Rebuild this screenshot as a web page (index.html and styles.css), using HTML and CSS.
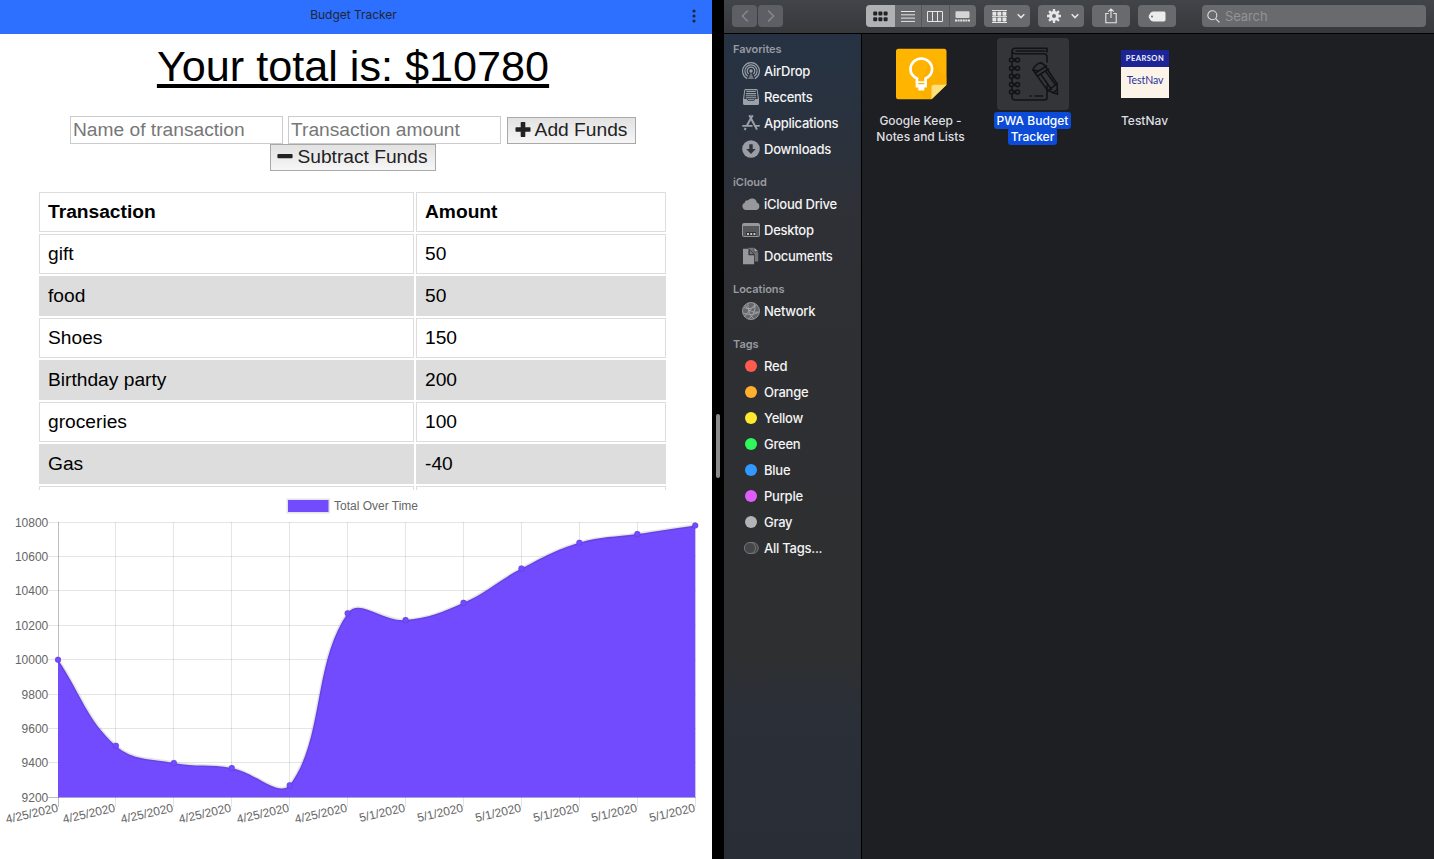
FILE: index.html
```html
<!DOCTYPE html>
<html lang="en">
<head>
<meta charset="utf-8">
<title>Budget Tracker</title>
<link rel="stylesheet" href="styles.css">
</head>
<body>
<div class="screen">
  <section class="app">
    <header class="app-bar"><span class="app-title">Budget Tracker</span>
      <svg class="app-menu" width="4" height="14" viewBox="0 0 4 14"><circle cx="2" cy="2" r="1.6"/><circle cx="2" cy="7" r="1.6"/><circle cx="2" cy="12" r="1.6"/></svg>
    </header>
    <h1 class="total">Your total is: $10780</h1>
    <form class="form">
      <div class="form-row">
        <input class="field" type="text" placeholder="Name of transaction">
        <input class="field" type="text" placeholder="Transaction amount">
        <button class="btn btn-add" type="button"><svg class="btn-icon" width="16" height="16" viewBox="0 0 16 16"><path d="M6.200 0h3.600l.5.500v4.700H15l.5.500v3.600l-.5.500h-4.700v4.700l-.5.500H6.200l-.5-.5V9.800H1l-.5-.5V5.700l.5-.5h4.700V.5z"/></svg>Add Funds</button>
      </div>
      <div class="form-row">
        <button class="btn btn-sub" type="button"><svg class="btn-icon" width="16" height="16" viewBox="0 0 16 16"><rect x=".4" y="4.900" width="15.200" height="4.400" rx="1"/></svg>Subtract Funds</button>
      </div>
    </form>
    <div class="table-wrap">
      <table class="ledger">
        <thead><tr><th class="col-name">Transaction</th><th class="col-amount">Amount</th></tr></thead>
        <tbody>
          <tr><td>gift</td><td>50</td></tr>
          <tr><td>food</td><td>50</td></tr>
          <tr><td>Shoes</td><td>150</td></tr>
          <tr><td>Birthday party</td><td>200</td></tr>
          <tr><td>groceries</td><td>100</td></tr>
          <tr><td>Gas</td><td>-40</td></tr>
          <tr><td>&nbsp;</td><td>&nbsp;</td></tr>
        </tbody>
      </table>
    </div>
    <svg class="chart" id="chart" width="712" height="369" viewBox="0 490 712 369"></svg>
  </section>

  <div class="divider"><span class="handle"></span></div>

  <section class="finder">
    <div class="toolbar">
      <div class="tool nav nav-back"><svg width="8" height="14" viewBox="0 0 8 14"><path d="M6.800 1.600 1.400 7l5.400 5.400"/></svg></div>
      <div class="tool nav"><svg width="8" height="14" viewBox="0 0 8 14"><path d="M1.200 1.600 6.600 7l-5.400 5.400"/></svg></div>
      <div class="tool views">
        <span class="seg seg-on"><svg width="15" height="11" viewBox="0 0 15 11"><g fill="#222326"><rect x=".2" y=".5" width="4" height="4" rx="1"/><rect x="5.400" y=".5" width="4" height="4" rx="1"/><rect x="10.600" y=".5" width="4" height="4" rx="1"/><rect x=".2" y="6.300" width="4" height="4" rx="1"/><rect x="5.400" y="6.300" width="4" height="4" rx="1"/><rect x="10.600" y="6.300" width="4" height="4" rx="1"/></g></svg></span>
        <span class="seg"><svg width="14" height="11" viewBox="0 0 14 11"><path d="M0 .5h14M0 3.800h14M0 7.100h14M0 10.400h14" stroke="#e6e6e7"/></svg></span>
        <span class="seg"><svg width="16" height="11" viewBox="0 0 16 11"><path d="M.5.500h15v10H.5zM5.500.5v10M10.500.5v10" fill="none" stroke="#e6e6e7"/></svg></span>
        <span class="seg"><svg width="15" height="11" viewBox="0 0 15 11"><rect x=".5" y=".3" width="14" height="6.600" rx=".8" fill="#d5d5d6"/><path d="M0 9.400h15" stroke="#e6e6e7" stroke-width="2" stroke-dasharray="2 .6"/></svg></span>
      </div>
      <div class="tool drop group"><svg width="15" height="13" viewBox="0 0 15 13"><path d="M0 .5h15M0 6.600h15M0 12.500h15" stroke="#e6e6e7"/><g fill="#e6e6e7"><rect x=".4" y="1.700" width="3.900" height="4" rx=".8"/><rect x="5.400" y="1.700" width="3.900" height="4" rx=".8"/><rect x="10.500" y="1.700" width="3.900" height="4" rx=".8"/><rect x=".4" y="7.600" width="3.900" height="4" rx=".8"/><rect x="5.400" y="7.600" width="3.900" height="4" rx=".8"/><rect x="10.500" y="7.600" width="3.900" height="4" rx=".8"/></g></svg><svg class="chev" width="8" height="6" viewBox="0 0 8 6"><path d="M.7 1.200 4 4.600l3.300-3.400"/></svg></div>
      <div class="tool drop"><svg width="14" height="14" viewBox="0 0 14 14"><circle cx="7" cy="7" r="3.500" fill="none" stroke="#e6e6e7" stroke-width="3"/><path d="M7 0v3M7 11v3M0 7h3M11 7h3M2.050 2.050l2.100 2.100M9.850 9.850l2.100 2.100M2.050 11.950l2.100-2.100M9.850 4.150l2.100-2.100" stroke="#e6e6e7" stroke-width="2.400"/></svg><svg class="chev" width="8" height="6" viewBox="0 0 8 6"><path d="M.7 1.200 4 4.600l3.300-3.400"/></svg></div>
      <div class="tool single"><svg width="12" height="16" viewBox="0 0 12 16"><path d="M3.600 5.500H.8v9.300h10.400V5.500H8.400M6 10V1M3.200 3.600 6 .9l2.800 2.700" fill="none" stroke="#e6e6e7" stroke-width="1.100"/></svg></div>
      <div class="tool single"><svg width="18" height="11" viewBox="0 0 18 11"><path d="M5 .5h10.800c1 0 1.700.7 1.700 1.700v6.600c0 1-.7 1.700-1.700 1.700H5C3.200 10.500.7 7.300.7 5.500S3.200.5 5 .5z" fill="#ececed"/><circle cx="4" cy="5.500" r="1" fill="#696a6d"/></svg></div>
      <div class="tool search"><svg width="13" height="13" viewBox="0 0 13 13"><circle cx="5.300" cy="5.300" r="4.500" fill="none" stroke="#dcdcdd" stroke-width="1.100"/><path d="m8.600 8.600 3.800 3.800" stroke="#dcdcdd" stroke-width="1.300"/></svg><span class="search-text">Search</span></div>
    </div>
    <div class="finder-body">
      <nav class="sidebar">
        <h2 class="side-head side-first">Favorites</h2>
        <div class="side-item"><svg class="side-icon" viewBox="0 0 18 18"><g fill="none" stroke="#9ba1ab" stroke-width="1.200"><path d="M5.200 16.600a8.400 8.400 0 1 1 7.600 0"/><path d="M5.800 14.200a6.100 6.100 0 1 1 6.400 0"/><path d="M6.700 12a3.800 3.800 0 1 1 4.600 0"/></g><circle cx="9" cy="9" r="1.700" fill="#9ba1ab"/><path d="M9 10.500l3 6.500H6z" fill="#9ba1ab" opacity=".6"/></svg><span>AirDrop</span></div>
        <div class="side-item"><svg class="side-icon" viewBox="0 0 18 18"><path d="M3 1h12l.7 1 1.300 9v4.500c0 .9-.6 1.500-1.500 1.500h-13C1.600 17 1 16.400 1 15.500V11L2.300 2z" fill="#9ba1ab"/><path d="M3.200 2.200h11.600l1 8.800h-2.600l-1.400 2H6.200l-1.400-2H2.200z" fill="#2b3442"/><path d="M4.300 3.500h9.400M4 5.600h10M3.900 7.700h10.200M3.800 9.800h10.400M6 11.700h6" stroke="#9ba1ab" stroke-width="1.100"/></svg><span>Recents</span></div>
        <div class="side-item"><svg class="side-icon" viewBox="0 0 18 18"><g fill="none" stroke="#9ba1ab" stroke-width="2"><path d="M7.300 1.200 15 15.600M10.700 1.200 5 11.300M3.700 13.900 2.600 16"/><path d="M.3 11.800h10.200M13 11.800h4.700" stroke-width="1.800"/></g></svg><span>Applications</span></div>
        <div class="side-item"><svg class="side-icon" viewBox="0 0 18 18"><circle cx="9" cy="9" r="8.800" fill="#9a9da4"/><path d="M7.300 4.200h3.400v4.700h3L9 13.900 4.300 8.900h3z" fill="#2e333d"/></svg><span>Downloads</span></div>
        <h2 class="side-head">iCloud</h2>
        <div class="side-item"><svg class="side-icon" viewBox="0 0 18 18"><path d="M4 15a3.800 3.800 0 0 1-1.300-7.300c.1-1.700 1.700-2.700 3.200-2.300A5 5 0 0 1 14.800 7.500 3.900 3.900 0 0 1 14.300 15z" fill="#97989b"/></svg><span>iCloud Drive</span></div>
        <div class="side-item"><svg class="side-icon" viewBox="0 0 18 18"><rect x=".5" y="2.500" width="17" height="13" rx="1" fill="#55575b" stroke="#97989b"/><path d="M1 4h16" stroke="#97989b" stroke-width="2"/><path d="M4.300 11.200h9.600v3.400H4.300z" fill="#27282b"/><path d="M5 13h8.500" stroke="#c0c1c3" stroke-width="1.800" stroke-dasharray="2 1.200"/></svg><span>Desktop</span></div>
        <div class="side-item"><svg class="side-icon" viewBox="0 0 18 18"><path d="M6.500.7h5.200v4.500h4.500v9.300h-3.400V8L9 4H6.500z" fill="#717276"/><path d="m12.300.7 3.900 3.900h-3.900z" fill="#a8a9ac"/><path d="M1 1.700h5.500v6.600h5.600v9H1z" fill="#97989b"/><path d="m7.300 2.300 4.900 5.200H7.300z" fill="#77787c" stroke="#303236" stroke-width=".8"/></svg><span>Documents</span></div>
        <h2 class="side-head">Locations</h2>
        <div class="side-item"><svg class="side-icon" viewBox="0 0 18 18"><circle cx="9" cy="9" r="8.500" fill="#66676b" stroke="#97989b"/><g fill="none" stroke="#a6a7aa" stroke-width=".9"><path d="M2 5.500c4 2 10 1 12-2.400M1.200 11c5 2 11.500 2 15.500-.9M6.200 1C5 5 7 13 12 17M12 1c2.500 5 0 12-5.500 16M2.500 14.500 12.500 3M3.500 3.500C6 9 12 11 16.500 10"/></g></svg><span>Network</span></div>
        <h2 class="side-head">Tags</h2>
        <div class="side-item"><i class="dot red"></i><span>Red</span></div>
        <div class="side-item"><i class="dot orange"></i><span>Orange</span></div>
        <div class="side-item"><i class="dot yellow"></i><span>Yellow</span></div>
        <div class="side-item"><i class="dot green"></i><span>Green</span></div>
        <div class="side-item"><i class="dot blue"></i><span>Blue</span></div>
        <div class="side-item"><i class="dot purple"></i><span>Purple</span></div>
        <div class="side-item"><i class="dot gray"></i><span>Gray</span></div>
        <div class="side-item"><svg class="side-icon" viewBox="0 0 18 18"><g fill="#45464a" stroke="#797a7e" stroke-width=".9"><circle cx="10.800" cy="9" r="5.500"/><circle cx="8" cy="9" r="5.600"/></g></svg><span>All Tags...</span></div>
      </nav>
      <div class="files">
        <div class="file">
          <div class="thumb"><svg width="52" height="52" viewBox="0 0 52 52"><path d="M3.500.800h45.500a2.500 2.500 0 0 1 2.500 2.500v33.500l-15 14.500h-33A2.500 2.500 0 0 1 1 48.800V3.300A2.500 2.500 0 0 1 3.500.8z" fill="#ffb500"/><path d="m34.500 12.500 17 17v7.500l-14.500 14h-6.500l-8-8z" fill="#f6a800" opacity=".45"/><path d="M36.500 51.300v-12a2.500 2.500 0 0 1 2.500-2.500h12.500z" fill="#ffe07a"/><path d="M22 33.500v-3c-4-1.900-6.500-5-6.500-9.200a10.800 10.800 0 0 1 21.600 0c0 4.200-2.600 7.300-6.600 9.200v3z" fill="none" stroke="#fff" stroke-width="2.700"/><path d="M20.700 33.500h11.200v6h-2.600v2.900h-6v-2.900h-2.600z" fill="#fff"/><path d="M23.300 32.500h6M23.300 35.600h6" stroke="#ffb500" stroke-width="1.300"/></svg></div>
          <p class="label">Google Keep -<br>Notes and Lists</p>
        </div>
        <div class="file">
          <div class="thumb thumb-on"><svg width="54" height="56" viewBox="0 0 54 56"><g fill="none" stroke="#121315" stroke-width="1.600" stroke-linecap="round" stroke-linejoin="round"><path d="M41 6V2.200H9.500C7 2.200 6 3.500 6 5s1 2.800 3.500 2.800H38c2 0 3 1 3 3V16M41 39.500v12c0 1.500-1 2.500-2.500 2.500H9.500C7.500 54 6 53 6 51v-3M6 5v7M10 5h29M29 50h7.500M24 50h1M41 46.500v2"/><path d="M6 17v3M6 25v3M6 33.500v3M6 41.500v3"/><g id="rings"><circle cx="5.500" cy="14" r="2"/><circle cx="11.500" cy="14" r="2"/><path d="M7.500 13.200h2M7.500 14.900h2"/></g><use href="#rings" y="8.200"/><use href="#rings" y="16.400"/><use href="#rings" y="24.600"/><use href="#rings" y="32"/><path d="m27 24 1.200-3 4-3.500 3.200-.6 3.400 2.600 12.200 18.300.5 10.500-9.800-3.700z"/><path d="m27 24 4.500.8M29.500 27l11-7M31.500 30l11-7M41.700 44.600l9.300-6.800M34.500 28l11 15.500M39.500 25l10 14M47 47l4.200-3.500"/></g></svg></div>
          <p class="label"><span class="picked">PWA Budget</span><br><span class="picked">Tracker</span></p>
        </div>
        <div class="file">
          <div class="thumb"><div class="testnav"><b class="pearson">PEARSON</b><span class="testnav-name">TestNav</span></div></div>
          <p class="label">TestNav</p>
        </div>
      </div>
    </div>
  </section>
</div>
<script src="chart.js"></script>
</body>
</html>
```
FILE: styles.css
```css
* { box-sizing: border-box; }
body { margin: 0; background: #000; overflow: hidden; }
.screen { display: flex; width: 1434px; height: 859px; }

/* Budget app */
.app { width: 712px; height: 859px; background: #fff; display: flex; flex-direction: column; font-family: "Liberation Sans", Arial, sans-serif; color: #000; }
.app-bar { height: 34px; flex: none; background: #2d70ff; display: grid; grid-template-columns: 1fr auto; align-items: center; padding: 0 16px 4px 15px; font: 12px/16px Inter, sans-serif; color: #202633; }
.app-title { text-align: center; letter-spacing: -.02px; }
.app-menu { fill: #202633; margin-top: 2px; }
.total { margin: 0; padding: 7px 6px 0 0; height: 82px; flex: none; font-size: 43.200px; line-height: 50px; font-weight: 400; text-align: center; text-decoration: underline; text-decoration-thickness: 4px; text-underline-offset: 3px; }
.form { flex: none; height: 76px; margin: 0; padding-right: 6px; }
.form-row { display: flex; justify-content: center; align-items: flex-end; height: 28px; }
.form-row + .form-row { height: 27px; }
.field { width: 213px; height: 28px; margin: 0 5px 0 0; padding: 0 2px 1px; border: 1px solid #ccc; border-radius: 0; background: #fff; font: 19.200px/22px "Liberation Sans", Arial, sans-serif; }
.field::placeholder { color: #777; opacity: 1; }
.btn { height: 27px; display: flex; align-items: center; justify-content: center; gap: 4px; padding: 0 1px 2px 0; border: 1px solid #a9a9a9; border-radius: 0; background: linear-gradient(#e2e2e2, #f6f6f6); font: 19.200px/22px "Liberation Sans", Arial, sans-serif; color: #222; }
.btn-add { width: 129px; margin-left: 1px; }
.btn-sub { width: 166px; }
.btn-icon { fill: #222; flex: none; }
.table-wrap { flex: none; height: 298px; overflow: hidden; padding-left: 37px; }
.ledger { width: 631px; table-layout: fixed; border-collapse: separate; border-spacing: 2px; margin-top: -2px; font-size: 19.200px; line-height: 22px; }
.ledger th, .ledger td { height: 40px; padding: 1px 8px; border: 1px solid #ddd; text-align: left; }
.col-name { width: 375px; }
.ledger tbody tr:nth-child(even) td { background: #ddd; }
.chart { display: block; flex: none; }
.tick { font: 12px "Liberation Sans", Arial, sans-serif; fill: #666; }
.grid { stroke: rgba(0, 0, 0, .1); shape-rendering: crispEdges; }
.axis { stroke: rgba(0, 0, 0, .25); shape-rendering: crispEdges; }
.area { fill: #724bff; }
.edge { fill: none; stroke: rgba(0, 0, 0, .1); stroke-width: 3; }
.point { fill: #724bff; stroke: rgba(0, 0, 0, .1); }

.divider { width: 12px; background: #000; display: flex; align-items: center; justify-content: center; padding-top: 33px; }
.handle { width: 4px; height: 64px; border-radius: 2px; background: #8b8b8b; }

/* File browser */
.finder { width: 710px; display: flex; flex-direction: column; font-family: Inter, sans-serif; background: #1e1f23; }
.toolbar { flex: none; height: 34px; display: flex; padding: 5px 8px 0; border-bottom: 1px solid #000; background: linear-gradient(#414449, #36383c); }
.tool { height: 22px; border-radius: 4px; background: #696a6d; display: flex; align-items: center; justify-content: center; margin-right: 8px; }
.nav { width: 25px; background: #5d5f64; margin-right: 83px; }
.nav-back { margin-right: 1px; }
.nav path { fill: none; stroke: #85878b; stroke-width: 1.500; }
.views { width: 110px; overflow: hidden; }
.seg { flex: 1; height: 22px; display: flex; align-items: center; justify-content: center; border-right: 1px solid #54565a; }
.seg-on { flex: none; width: 29px; background: #b0b1b3; border: 0; }
.seg:last-child { border: 0; }
.drop { width: 46px; gap: 10px; padding-left: 3px; }
.chev path { fill: none; stroke: #e6e6e7; stroke-width: 1.500; }
.single { width: 38px; }
.search { width: 224px; margin: 0 0 0 18px; justify-content: flex-start; padding-left: 5px; gap: 5px; }
.search-text { color: #929396; font-size: 13px; line-height: 20px; letter-spacing: -.1px; }
.finder-body { flex: 1; display: flex; }
.sidebar { width: 138px; border-right: 1px solid #000; padding-top: 6px; background: linear-gradient(#263243 0, #29323f 9%, #2f3035 24%, #2e2f31 60%, #2d2f31 76%, #2b2f37 82%, #282d36 100%); }
.side-head { margin: 0; height: 29px; padding: 11px 0 0 9px; font-size: 11px; line-height: 18px; font-weight: 600; color: #989ba0; letter-spacing: -.05px; }
.side-first { height: 18px; padding-top: 0; }
.side-item { height: 26px; padding-left: 18px; display: flex; align-items: center; gap: 4px; font-size: 13px; line-height: 18px; font-weight: 500; color: #f4f4f5; letter-spacing: -.25px; white-space: nowrap; }
.side-icon { width: 18px; height: 18px; flex: none; }
.dot { width: 12px; height: 12px; margin: 0 3px; border-radius: 50%; flex: none; }
.red { background: #ff5a4f; }
.orange { background: #ffb02e; }
.yellow { background: #ffe92e; }
.green { background: #30f85c; }
.blue { background: #3199ff; }
.purple { background: #df5cff; }
.gray { background: #b3b2b7; }
.files { flex: 1; display: flex; align-items: flex-start; padding: 4px 0 0 3px; }
.file { width: 112px; display: flex; flex-direction: column; align-items: center; }
.thumb { width: 72px; height: 72px; display: flex; align-items: center; justify-content: center; border-radius: 4px; }
.thumb-on { background: #343538; }
.label { margin: 3px 1px 0 0; font-size: 12px; line-height: 16px; font-weight: 500; text-align: center; color: #dedee0; white-space: nowrap; }
.picked { padding: 1px 3px; border-radius: 3px; background: #0b4bd8; color: #fff; }
.testnav { width: 48px; height: 48px; background: #fdf4e9; display: flex; flex-direction: column; align-items: center; }
.pearson { width: 48px; height: 17px; background: #1d2596; color: #f3f3fb; font: 700 7.500px/18px Lato, sans-serif; letter-spacing: .5px; text-align: center; }
.testnav-name { font: 10.500px/26px Lato, sans-serif; letter-spacing: -.1px; color: #27309c; }
```
FILE: chart.js
```js
const values = [10000, 9500, 9400, 9370, 9270, 10270, 10230, 10330, 10530, 10680, 10730, 10780];
const area = { left: 58, right: 695.2, top: 522, bottom: 797.3 };
const X = i => area.left + i * (area.right - area.left) / (values.length - 1);
const Y = v => area.bottom - (v - 9200) / 1600 * (area.bottom - area.top);
const snap = v => Math.floor(v) + 0.5;
const clampY = y => Math.min(area.bottom, Math.max(area.top, y));
const pts = values.map((v, i) => ({ x: X(i), y: Y(v) }));

// Control points on both sides of each value, tension 0.4
const ctrl = pts.map((p, i) => {
  const a = pts[i - 1] || p, b = pts[i + 1] || p;
  const d1 = Math.hypot(p.x - a.x, p.y - a.y), d2 = Math.hypot(b.x - p.x, b.y - p.y);
  const f1 = 0.4 * d1 / (d1 + d2), f2 = 0.4 * d2 / (d1 + d2);
  return {
    inX: p.x - f1 * (b.x - a.x), inY: clampY(p.y - f1 * (b.y - a.y)),
    outX: p.x + f2 * (b.x - a.x), outY: clampY(p.y + f2 * (b.y - a.y))
  };
});
let d = `M${pts[0].x} ${pts[0].y}`;
for (let i = 1; i < pts.length; i++) {
  const o = ctrl[i - 1], n = ctrl[i];
  d += `C${o.outX} ${o.outY} ${n.inX} ${n.inY} ${pts[i].x} ${pts[i].y}`;
}

let out = '';
for (let v = 9200; v <= 10800; v += 200) {
  const y = snap(Y(v));
  out += `<path class="${v === 9200 ? 'axis' : 'grid'}" d="M48 ${y}H696"/>`;
  out += `<text class="tick" x="48.300" y="${y + 4}" text-anchor="end">${v}</text>`;
}
pts.forEach((p, i) => {
  const x = snap(p.x - (i ? 0.2 : 0));
  out += `<path class="${i ? 'grid' : 'axis'}" d="M${x} 522V807"/>`;
  out += `<text class="tick" text-anchor="end" transform="translate(${x - 0.7} 807.500) rotate(-13)" y="4">${i < 6 ? '4/25/2020' : '5/1/2020'}</text>`;
});
out += `<path class="area" d="${d}V${area.bottom}H${area.left}Z"/><path class="edge" d="${d}"/>`;
pts.forEach(p => { out += `<circle class="point" cx="${p.x}" cy="${p.y}" r="3"/>`; });
out += '<rect x="288" y="500" width="40.500" height="12" fill="#724bff" stroke="rgba(0,0,0,.1)" stroke-width="3" paint-order="stroke"/>';
out += '<text class="tick" x="334" y="510">Total Over Time</text>';
document.getElementById('chart').innerHTML = out;
```
